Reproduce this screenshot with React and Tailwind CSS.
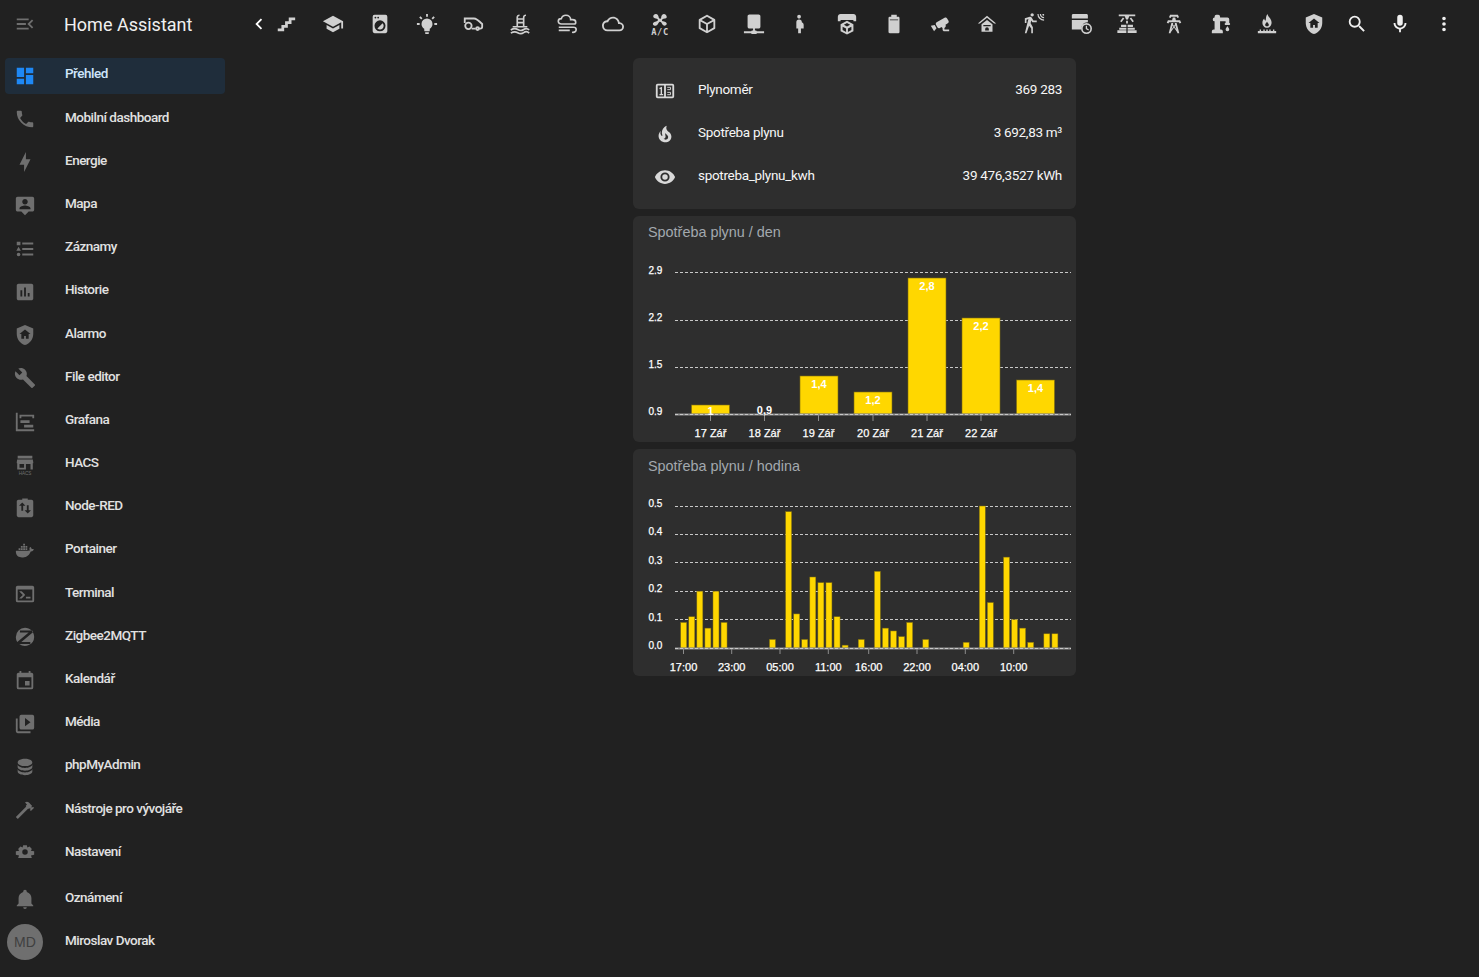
// App.jsx
import React from "react";

const P = {
  menuOpen: "M21,15.61L19.59,17L14.58,12L19.59,7L21,8.39L17.44,12L21,15.61M3,6H16V8H3V6M3,13V11H13V13H3M3,18V16H16V18H3Z",
  dashboard: "M13,3V9H21V3M13,21H21V11H13M3,21H11V15H3M3,13H11V3H3V13Z",
  phone: "M6.62,10.79C8.06,13.62 10.38,15.94 13.21,17.38L15.41,15.18C15.69,14.9 16.08,14.82 16.43,14.93C17.55,15.3 18.75,15.5 20,15.5A1,1 0 0,1 21,16.5V20A1,1 0 0,1 20,21A17,17 0 0,1 3,4A1,1 0 0,1 4,3H7.5A1,1 0 0,1 8.5,4C8.5,5.25 8.7,6.45 9.07,7.57C9.18,7.92 9.1,8.31 8.82,8.59L6.62,10.79Z",
  bolt: "M11 15H6L13 1V9H18L11 23V15Z",
  map: "M20 2H4C2.9 2 2 2.9 2 4V16C2 17.1 2.9 18 4 18H8L12 22L16 18H20C21.1 18 22 17.1 22 16V4C22 2.9 21.1 2 20 2M12 4.3C13.66 4.3 15 5.64 15 7.3S13.66 10.3 12 10.3 9 8.96 9 7.3 10.34 4.3 12 4.3M18 15.5H6V14.5C6 12.7 10 11.5 12 11.5S18 12.7 18 14.5V15.5Z",
  logbook: "M5,9.5L7.5,14H2.5L5,9.5M3,4H7V8H3V4M5,20A2,2 0 0,0 7,18A2,2 0 0,0 5,16A2,2 0 0,0 3,18A2,2 0 0,0 5,20M9,5V7H21V5H9M9,19H21V17H9V19M9,13H21V11H9V13Z",
  chartBox: "M19 3H5C3.9 3 3 3.9 3 5V19C3 20.1 3.9 21 5 21H19C20.1 21 21 20.1 21 19V5C21 3.9 20.1 3 19 3M9 17H7V10H9V17M13 17H11V7H13V17M17 17H15V13H17V17Z",
  shieldHome: "M12 1L3 5V11C3 16.5 6.8 21.7 12 23C17.2 21.7 21 16.5 21 11V5L12 1M16 11V16H13V13H11V16H8V11H6L12 6L18 11H16Z",
  wrench: "M22.7,19L13.6,9.9C14.5,7.6 14,4.9 12.1,3C10.1,1 7.1,0.6 4.7,1.7L9,6L6,9L1.6,4.7C0.4,7.1 0.9,10.1 2.9,12.1C4.8,14 7.5,14.5 9.8,13.6L18.9,22.7C19.3,23.1 19.9,23.1 20.3,22.7L22.6,20.4C23.1,20 23.1,19.3 22.7,19Z",
  timeline: "M2,2H4V20H22V22H2V2M7,10H17V13H7V10M11,15H21V18H11V15M6,4H22V8H20V6H8V8H6V4Z",
  nodeRed: "M5 3H9V1.5H15V3H19C20.1 3 21 3.9 21 5V20C21 21.1 20.1 22 19 22H5C3.9 22 3 21.1 3 20V5C3 3.9 3.9 3 5 3M9 6L5.5 9.5H8V15H10V9.5H12.5L9 6M14 9V14.5H11.5L15 18L18.5 14.5H16V9H14Z",
  docker: "M21.81 10.25C21.75 10.21 21.25 9.83 20.19 9.83C19.91 9.83 19.63 9.85 19.35 9.9C19.14 8.44 17.94 7.73 17.89 7.7L17.6 7.53L17.41 7.81C17.17 8.18 17 8.59 16.9 9C16.71 9.83 16.83 10.62 17.25 11.29C16.74 11.58 15.92 11.65 15.75 11.66H2.62C2.28 11.66 2 11.94 2 12.28C2 13.42 2.18 14.55 2.57 15.62C3 16.76 3.65 17.6 4.5 18.13C5.46 18.72 7 19 8.79 19C9.57 19 10.35 18.93 11.11 18.79C12.19 18.59 13.22 18.22 14.17 17.67C14.95 17.22 15.65 16.65 16.24 15.97C17.24 14.84 17.83 13.58 18.27 12.46H18.45C19.54 12.46 20.22 12.03 20.59 11.66C20.84 11.43 21.03 11.15 21.16 10.83L21.24 10.6L21.81 10.25M5 10.9H7V9H5V10.9M7.5 10.9H9.5V9H7.5V10.9M10 10.9H12V9H10V10.9M12.5 10.9H14.5V9H12.5V10.9M7.5 8.5H9.5V6.5H7.5V8.5M10 8.5H12V6.5H10V8.5M12.5 8.5H14.5V6.5H12.5V8.5M10 6H12V4H10V6Z",
  console: "M20,19V7H4V19H20M20,3A2,2 0 0,1 22,5V19A2,2 0 0,1 20,21H4A2,2 0 0,1 2,19V5C2,3.89 2.9,3 4,3H20M13,17V15H18V17H13M9.58,13L5.57,9H8.4L11.7,12.3C12.09,12.69 12.09,13.33 11.7,13.72L8.42,17H5.59L9.58,13Z",
  zigbee: "M12 2A10 10 0 0 0 2 12C2 14 2.6 15.9 3.6 17.5L16 7H6.5V5H19.8L21 6.6L8 17.5H17.8V19.5H5.7A10 10 0 0 0 22 12C22 6.5 17.5 2 12 2Z",
  calendar: "M19 19H5V8H19M16 1V3H8V1H6V3H5C3.89 3 3 3.89 3 5V19A2 2 0 0 0 5 21H19A2 2 0 0 0 21 19V5C21 3.89 20.1 3 19 3H18V1M17 12H12V17H17V12Z",
  media: "M4,6H2V20A2,2 0 0,0 4,22H18V20H4V6M20,2H8A2,2 0 0,0 6,4V16A2,2 0 0,0 8,18H20A2,2 0 0,0 22,16V4A2,2 0 0,0 20,2M12,14.5V5.5L18,10L12,14.5Z",
  database: "M12,3C7.58,3 4,4.79 4,7C4,9.21 7.58,11 12,11C16.42,11 20,9.21 20,7C20,4.79 16.42,3 12,3M4,9V12C4,14.21 7.58,16 12,16C16.42,16 20,14.21 20,12V9C20,11.21 16.42,13 12,13C7.58,13 4,11.21 4,9M4,14V17C4,19.21 7.58,21 12,21C16.42,21 20,19.21 20,17V14C20,16.21 16.42,18 12,18C7.58,18 4,16.21 4,14Z",
  hammer: "M2 19.63L13.43 8.2L12.72 7.5L14.14 6.07L12 3.89C13.2 2.7 15.09 2.7 16.27 3.89L19.87 7.5L18.45 8.91H21.29L22 9.62L18.45 13.21L17.74 12.5V9.62L16.27 11.04L15.56 10.33L4.13 21.76L2 19.63Z",
  cog: "M10 3.5H14L14.6 6L17 5L19.5 7.5L18.3 9.5L22 10V14L18.5 14.8L19.5 17.5H4.5L5.5 14.8L2 14V10L5.7 9.5L4.5 7.5L7 5L9.4 6L10 3.5M12 8A3 3 0 1 0 12 14A3 3 0 0 0 12 8Z",
  bell: "M21,19V20H3V19L5,17V11C5,7.9 7.03,5.17 10,4.29C10,4.19 10,4.1 10,4A2,2 0 0,1 12,2A2,2 0 0,1 14,4C14,4.1 14,4.19 14,4.29C16.97,5.17 19,7.9 19,11V17L21,19M14,21A2,2 0 0,1 12,23A2,2 0 0,1 10,21",
  chevronLeft: "M15.41,16.58L10.83,12L15.41,7.41L14,6L8,12L14,18L15.41,16.58Z",
  stairs: "M15,5V9H11V13H7V17H3V20H10V16H14V12H18V8H22V5H15Z",
  school: "M12,3L1,9L12,15L21,10.09V17H23V9M5,13.18V17.18L12,21L19,17.18V13.18L12,17L5,13.18Z",
  washer: "M14.83,11.17C16.39,12.73 16.39,15.27 14.83,16.83C13.27,18.39 10.73,18.39 9.17,16.83L14.83,11.17M6,2H18A2,2 0 0,1 20,4V20A2,2 0 0,1 18,22H6A2,2 0 0,1 4,20V4A2,2 0 0,1 6,2M7,4A1,1 0 0,0 6,5A1,1 0 0,0 7,6A1,1 0 0,0 8,5A1,1 0 0,0 7,4M10,4A1,1 0 0,0 9,5A1,1 0 0,0 10,6A1,1 0 0,0 11,5A1,1 0 0,0 10,4M12,8A6,6 0 0,0 6,14A6,6 0 0,0 12,20A6,6 0 0,0 18,14A6,6 0 0,0 12,8Z",
  bulb: "M12,6A6,6 0 0,1 18,12C18,14.22 16.79,16.16 15,17.2V19A1,1 0 0,1 14,20H10A1,1 0 0,1 9,19V17.2C7.21,16.16 6,14.22 6,12A6,6 0 0,1 12,6M14,21V22A1,1 0 0,1 13,23H11A1,1 0 0,1 10,22V21H14M20,11H23V13H20V11M1,11H4V13H1V11M13,1V4H11V1H13M4.92,3.5L7.05,5.64L5.63,7.05L3.5,4.93L4.92,3.5M16.95,5.63L19.07,3.5L20.5,4.93L18.37,7.05L16.95,5.63Z",
  cloud: "M19,18H6A4,4 0 0,1 2,14A4,4 0 0,1 6,10H6.71C7.37,7.69 9.5,6 12,6A5.5,5.5 0 0,1 17.5,11.5V12H19A3,3 0 0,1 22,15A3,3 0 0,1 19,18M19.35,10.03C18.67,6.59 15.64,4 12,4C9.11,4 6.6,5.64 5.35,8.03C2.34,8.36 0,10.9 0,14A6,6 0 0,0 6,20H19A5,5 0 0,0 24,15C24,12.36 21.95,10.22 19.35,10.03Z",
  cube: "M21,16.5C21,16.88 20.79,17.21 20.47,17.38L12.57,21.82C12.41,21.94 12.21,22 12,22C11.79,22 11.59,21.94 11.43,21.82L3.53,17.38C3.21,17.21 3,16.88 3,16.5V7.5C3,7.12 3.21,6.79 3.53,6.62L11.43,2.18C11.59,2.06 11.79,2 12,2C12.21,2 12.41,2.06 12.57,2.18L20.47,6.62C20.79,6.79 21,7.12 21,7.5V16.5M12,4.15L6.04,7.5L12,10.85L17.96,7.5L12,4.15M5,15.91L11,19.29V12.58L5,9.21V15.91M19,15.91V9.21L13,12.58V19.29L19,15.91Z",
  nas: "M7 1.5H17C18.1 1.5 19 2.4 19 3.5V15C19 16.1 18.1 17 17 17H13V19H14A1 1 0 0 1 15 20H23V22H15A1 1 0 0 1 14 23H10A1 1 0 0 1 9 22H1V20H9A1 1 0 0 1 10 19H11V17H7C5.9 17 5 16.1 5 15V3.5C5 2.4 5.9 1.5 7 1.5Z",
  pregnant: "M9,4C9,2.89 9.89,2 11,2C12.11,2 13,2.89 13,4C13,5.11 12.11,6 11,6C9.89,6 9,5.11 9,4M16,13C16,11.66 15.17,10.5 14,10A3,3 0 0,0 11,7A3,3 0 0,0 8,10V17H10V22H13V17H16V13Z",
  printer: "M5 1H19C20.7 1 22 2.3 22 4V9H19V7.5H5V9H2V4C2 2.3 3.3 1 5 1M12 8.5L19 12.3V19.8L12 23.5L5 19.8V12.3L12 8.5M12 11L8.6 12.9L12 14.8L15.4 12.9L12 11M7.2 14.9V18.6L11 20.7V16.9L7.2 14.9M16.8 14.9L13 16.9V20.7L16.8 18.6V14.9Z",
  battery: "M16.67,4H15V2H9V4H7.33A1.33,1.33 0 0,0 6,5.33V20.67C6,21.4 6.6,22 7.33,22H16.67A1.33,1.33 0 0,0 18,20.67V5.33C18,4.6 17.4,4 16.67,4M16.5 7H7.5V8H16.5V7Z",
  cctv: "M18.15,4.94C17.77,4.91 17.37,5 17,5.2L8.35,10.2C7.39,10.76 7.07,12 7.62,12.94L9.12,15.53C9.67,16.5 10.89,16.82 11.85,16.27L13.65,15.23C13.92,15.69 14.32,16.06 14.81,16.27V18.04C14.81,19.13 15.7,20 16.81,20H22V18.04H16.81V16.27C17.72,15.87 18.31,14.97 18.31,14C18.31,13.54 18.19,13.11 17.97,12.73L20.5,11.27C21.47,10.71 21.8,9.5 21.24,8.53L19.74,5.94C19.4,5.34 18.79,5 18.15,4.94M6.22,13.17L2,13.87L2.75,15.17L4.75,18.63L5.5,19.93L8.22,16.63L6.22,13.17Z",
  garage: "M12 3L2 11.5H4.2L12 5.3L19.8 11.5H22L12 3M12 7.5L6 12.3V20.5H18V12.3L12 7.5M8 13H16V14.5H8V13M12 15.5A2 2 0 0 1 14 17.5V19H10V17.5A2 2 0 0 1 12 15.5Z",
  motion: "M10,0.2C9,0.2 8.2,1 8.2,2C8.2,3 9,3.8 10,3.8C11,3.8 11.8,3 11.8,2C11.8,1 11,0.2 10,0.2M15.67,1A7.33,7.33 0 0,0 23,8.33V7A6,6 0 0,1 17,1H15.67M18.33,1C18.33,3.58 20.42,5.67 23,5.67V4.33C21.16,4.33 19.67,2.84 19.67,1H18.33M21,1A2,2 0 0,0 23,3V1H21M7.92,4.03C7.75,4.03 7.58,4.06 7.42,4.11L2,5.8V11H3.8V7.33L5.91,6.67L2,22H3.8L6.67,13.89L9,17V22H10.8V15.59L8.31,11.05L9.04,8.18L10.12,10H15V8.2H11.38L9.38,4.87C9.08,4.37 8.54,4.03 7.92,4.03Z",
  storeClock: "M2 2.5C2 1.7 2.7 1 3.5 1H18C18.8 1 19.5 1.7 19.5 2.5V6H2V2.5M2 7.5H19.5V10.2C15.5 10 12.2 13 12 18H2V7.5M18 11A6 6 0 1 1 18 23A6 6 0 0 1 18 11M18 12.8A4.2 4.2 0 1 0 18 21.2A4.2 4.2 0 0 0 18 12.8M17.2 14H18.6V16.7L20.7 18L20 19.1L17.2 17.5V14Z",
  sprinkler: "M3 1.5H21V3.5H14.5L13 7H11L9.5 3.5H3V1.5M7.5 5L9 6L6 10L4.5 9L7.5 5M16.5 5L19.5 9L18 10L15 6L16.5 5M11 8.5H13V11.5H11V8.5M5.5 12.8H11.3V15.3H5.5V12.8M12.7 12.8H18.5V15.3H12.7V12.8M3.5 16H11.3V18.2H3.5V16M12.7 16H20.5V18.2H12.7V16M1.5 18.9H11.3V21.8H1.5V18.9M12.7 18.9H22.5V21.8H12.7V18.9Z",
  tower: "M8.28,5.45L6.5,4.55L7.76,2H16.23L17.5,4.55L15.72,5.44L15,4H9L8.28,5.45M18.62,8H14.09L13.3,5H10.7L9.91,8H5.38L4.1,10.55L5.89,11.44L6.62,10H17.38L18.1,11.45L19.89,10.56L18.62,8M17.77,22H15.7L15.46,21.1L12,15.9L8.53,21.1L8.3,22H6.23L9.12,11H11.19L10.83,12.35L12,14.1L13.16,12.35L12.81,11H14.88L17.77,22M11.4,15L10.5,13.65L9.32,18.13L11.4,15M14.68,18.12L13.5,13.64L12.6,15L14.68,18.12Z",
  pump: "M19,14.5C19,14.5 21,16.67 21,18A2,2 0 0,1 19,20A2,2 0 0,1 17,18C17,16.67 19,14.5 19,14.5M5,18V9A2,2 0 0,1 3,7A2,2 0 0,1 5,5V4A2,2 0 0,1 7,2H9A2,2 0 0,1 11,4V5H19A2,2 0 0,1 21,7V9L21,11A1,1 0 0,1 22,12A1,1 0 0,1 21,13H17A1,1 0 0,1 16,12A1,1 0 0,1 17,11V9H11V18H12A2,2 0 0,1 14,20V22H2V20A2,2 0 0,1 4,18H5Z",
  burner: "M12.5 1C13 4 17 6 17 10.5C17 13.5 14.8 16 12 16C9.2 16 7 13.5 7 10.5C7 8.5 8 7 9 6C9 7.5 9.8 8.3 10.6 8.3C11 5.5 10.8 3 12.5 1M12 9.5C11.4 10.8 10 11.3 10 12.8C10 13.9 10.9 14.5 12 14.5C13.1 14.5 14 13.9 14 12.8C14 11.3 12.6 10.8 12 9.5M4 18H5.5V19.5H8V18H9.5V19.5H11.2V18H12.8V19.5H14.5V18H16V19.5H18.5V18H20V19.5H22V22H2V19.5H4V18Z",
  magnify: "M9.5,3A6.5,6.5 0 0,1 16,9.5C16,11.11 15.41,12.59 14.44,13.73L14.71,14H15.5L20.5,19L19,20.5L14,15.5V14.71L13.73,14.44C12.59,15.41 11.11,16 9.5,16A6.5,6.5 0 0,1 3,9.5A6.5,6.5 0 0,1 9.5,3M9.5,5C7,5 5,7 5,9.5C5,12 7,14 9.5,14C12,14 14,12 14,9.5C14,7 12,5 9.5,5Z",
  mic: "M12,2A3,3 0 0,1 15,5V11A3,3 0 0,1 12,14A3,3 0 0,1 9,11V5A3,3 0 0,1 12,2M19,11C19,14.53 16.39,17.44 13,17.93V21H11V17.93C7.61,17.44 5,14.53 5,11H7A5,5 0 0,0 12,16A5,5 0 0,0 17,11H19Z",
  dots: "M12,16A2,2 0 0,1 14,18A2,2 0 0,1 12,20A2,2 0 0,1 10,18A2,2 0 0,1 12,16M12,10A2,2 0 0,1 14,12A2,2 0 0,1 12,14A2,2 0 0,1 10,12A2,2 0 0,1 12,10M12,4A2,2 0 0,1 14,6A2,2 0 0,1 12,8A2,2 0 0,1 10,6A2,2 0 0,1 12,4Z",
  fire: "M17.66 11.2C17.43 10.9 17.15 10.64 16.89 10.38C16.22 9.78 15.46 9.35 14.82 8.72C13.33 7.26 13 4.85 13.95 3C13 3.23 12.17 3.75 11.46 4.32C8.87 6.4 7.85 10.07 9.07 13.22C9.11 13.32 9.15 13.42 9.15 13.55C9.15 13.77 9 13.97 8.8 14.05C8.57 14.15 8.33 14.09 8.14 13.93C8.08 13.88 8.04 13.83 8 13.76C6.87 12.33 6.69 10.28 7.45 8.64C5.78 10 4.87 12.3 5 14.47C5.06 14.97 5.12 15.47 5.29 15.97C5.43 16.57 5.7 17.17 6 17.7C7.08 19.43 8.95 20.67 10.96 20.92C13.1 21.19 15.39 20.8 17.03 19.32C18.86 17.66 19.5 15 18.56 12.72L18.43 12.46C18.22 12 17.66 11.2 17.66 11.2M14.5 17.5C14.22 17.74 13.76 18 13.4 18.1C12.28 18.5 11.16 17.94 10.5 17.28C11.69 17 12.4 16.12 12.61 15.23C12.78 14.43 12.46 13.77 12.33 13C12.21 12.26 12.23 11.63 12.5 10.94C12.69 11.32 12.89 11.7 13.13 12C13.9 13 15.11 13.44 15.37 14.8C15.41 14.94 15.43 15.08 15.43 15.23C15.46 16.05 15.1 16.95 14.5 17.5H14.5Z",
  eye: "M12,9A3,3 0 0,0 9,12A3,3 0 0,0 12,15A3,3 0 0,0 15,12A3,3 0 0,0 12,9M12,17A5,5 0 0,1 7,12A5,5 0 0,1 12,7A5,5 0 0,1 17,12A5,5 0 0,1 12,17M12,4.5C7,4.5 2.73,7.61 1,12C2.73,16.39 7,19.5 12,19.5C17,19.5 21.27,16.39 23,12C21.27,7.61 17,4.5 12,4.5Z",
};

function Icon({ d, className = "" }) {
  return (
    <svg viewBox="0 0 24 24" className={`w-[22px] h-[22px] fill-current ${className}`}>
      <path d={d} fillRule="evenodd" />
    </svg>
  );
}

// outline icons that are easier as strokes
function MowerIcon() {
  return (
    <svg viewBox="0 0 24 24" className="w-[22px] h-[22px]" fill="none" stroke="currentColor" strokeWidth="2">
      <path d="M3 11V6H13C16 6 20 10 22 12V15C22 16 21 17 20 17H18.5M10.5 17H15" />
      <circle cx="7" cy="14" r="3.5" />
      <circle cx="17" cy="17" r="1.5" />
    </svg>
  );
}

function PoolIcon() {
  return (
    <svg viewBox="0 0 24 24" className="w-[22px] h-[22px]" fill="none" stroke="currentColor" strokeWidth="1.8">
      <path d="M9 15V5C9 3.5 10 2.5 11.5 2.5M16 15V5C16 3.5 17 2.5 18.5 2.5M9 6.5H16M9 10.5H16M4 15H20" />
      <path d="M2 18.5C5 16.5 7 16.5 9.5 18C12 19.5 14 19.5 16 18C18 16.5 20 16.5 22 18.5M2 22C5 20 7 20 9.5 21.5C12 23 14 23 16 21.5C18 20 20 20 22 22" />
    </svg>
  );
}

function WindyIcon() {
  return (
    <svg viewBox="0 0 24 24" className="w-[22px] h-[22px]" fill="none" stroke="currentColor" strokeWidth="1.8">
      <path d="M6 12C3.5 12 2.5 10.5 2.5 9C2.5 7.5 3.7 6.2 5.8 6.2C6.5 3.8 8.5 2.5 10.8 2.5C13.8 2.5 16 4.6 16 7.3H18C20 7.3 21.5 8.5 21.5 10C21.5 11 21 12 20 12H6Z" />
      <path d="M3 15.5H19C21 15.5 22 16.8 22 18C22 20 20.3 21.5 17.5 21M3 19H15" />
    </svg>
  );
}

function AcIcon() {
  return (
    <svg viewBox="0 0 24 24" className="w-[22px] h-[22px] overflow-visible">
      <g transform="translate(12 7.5) scale(0.82) translate(-12 -9.7)">
        <path fill="currentColor" d="M12 8.3C13 8.3 13.5 7.8 13.5 7C13.5 5.5 14.5 2 17 2C19.5 2 21 4.5 21 6C21 8.5 17.5 8 16 8.5C15 8.8 14.5 9.5 14.5 10.5C14.8 11.5 16 11.5 17 11.8C19 12.3 21 13 21 15C21 16.5 19.5 17.5 18 17.5C15.5 17.5 14.2 14 13.5 13C13 12.2 12.2 12 11.5 12.2C10.5 12.8 9.8 14 9 15.5C8 17 6.5 17.5 5 17.5C3.5 17.5 2.5 16.5 2.5 15C2.5 13 5 12.2 7 11.8C8.5 11.4 9.3 11 9.3 10C9.3 9 8 8.5 6.5 8C4.5 7.3 3 7 3 5C3 3.5 4.5 2 6.5 2C9 2 9.8 4.5 10.2 6C10.5 7.5 11 8.3 12 8.3Z" />
      </g>
      <text x="12" y="23.5" textAnchor="middle" fill="currentColor" fontSize="9.5" fontWeight="700" letterSpacing="0.6" fontFamily="'DejaVu Sans Mono', monospace">A/C</text>
    </svg>
  );
}

function HacsIcon() {
  return (
    <svg viewBox="0 0 24 24" className="w-[22px] h-[22px]">
      <path fill="currentColor" fillRule="evenodd" d="M4 2H20V5H4V2M3.5 6H20.5L21 9V10H20.5V17H3.5V10H3V9L3.5 6M6 11V15H11V11H6M13 11V17H18V11H13Z" />
      <text x="12" y="23" textAnchor="middle" fill="currentColor" fontSize="5" fontFamily="'Liberation Sans', sans-serif">HACS</text>
    </svg>
  );
}

function CounterIcon() {
  return (
    <svg viewBox="0 0 24 24" className="w-[22px] h-[22px]" fill="none" stroke="currentColor">
      <rect x="3" y="5" width="18" height="14" rx="1" strokeWidth="2" />
      <path d="M12 5V19" strokeWidth="2" />
      <path d="M6 9.5L8 8.5V16M6 16H10" strokeWidth="1.5" />
      <path d="M14.5 8H18V10.5H14.5M14.5 13.5H18V16H14.5" strokeWidth="1" />
    </svg>
  );
}

const navItems = [
  { label: "Přehled", d: P.dashboard, active: true },
  { label: "Mobilní dashboard", d: P.phone },
  { label: "Energie", d: P.bolt },
  { label: "Mapa", d: P.map },
  { label: "Záznamy", d: P.logbook },
  { label: "Historie", d: P.chartBox },
  { label: "Alarmo", d: P.shieldHome },
  { label: "File editor", d: P.wrench },
  { label: "Grafana", d: P.timeline },
  { label: "HACS", custom: <HacsIcon /> },
  { label: "Node-RED", d: P.nodeRed },
  { label: "Portainer", d: P.docker },
  { label: "Terminal", d: P.console },
  { label: "Zigbee2MQTT", d: P.zigbee },
  { label: "Kalendář", d: P.calendar },
  { label: "Média", d: P.media },
  { label: "phpMyAdmin", d: P.database },
  { label: "Nástroje pro vývojáře", d: P.hammer },
  { label: "Nastavení", d: P.cog },
];

const tabs = [
  <Icon d={P.stairs} />, <Icon d={P.school} />, <Icon d={P.washer} />, <Icon d={P.bulb} />,
  <MowerIcon />, <PoolIcon />, <WindyIcon />, <Icon d={P.cloud} />, <AcIcon />,
  <Icon d={P.cube} />, <Icon d={P.nas} />, <Icon d={P.pregnant} />, <Icon d={P.printer} />,
  <Icon d={P.battery} />, <Icon d={P.cctv} />, <Icon d={P.garage} />, <Icon d={P.motion} />,
  <Icon d={P.storeClock} />, <Icon d={P.sprinkler} />, <Icon d={P.tower} />, <Icon d={P.pump} />,
  <Icon d={P.burner} />, <Icon d={P.shieldHome} />,
];

function NavRow({ item }) {
  return (
    <div className={`flex items-center h-[36px] rounded ${item.active ? "bg-[#1f2d3b]" : ""}`}>
      <div className={`w-[40px] flex justify-center ${item.active ? "text-[#1e88f5]" : "text-[#6f6f6f]"}`}>
        {item.custom || <Icon d={item.d} />}
      </div>
      <span className={`ml-[20px] pb-[5px] text-[13.5px] font-medium tracking-[-0.5px] ${item.active ? "text-[#cfe6fb]" : "text-[#e1e1e1]"}`}>
        {item.label}
      </span>
    </div>
  );
}

function Sidebar() {
  return (
    <aside className="w-[230px] shrink-0 flex flex-col">
      <div className="h-[58px] flex items-start pt-[13px]">
        <div className="w-[50px] flex justify-center text-[#6f6f6f]">
          <Icon d={P.menuOpen} />
        </div>
        <span className="ml-[14px] text-[18px] leading-[24px] text-[#f0f0f0]">Home Assistant</span>
      </div>
      <div className="ml-[5px] mr-[5px] flex flex-col gap-[7.2px]">
        {navItems.map((item) => (
          <NavRow key={item.label} item={item} />
        ))}
      </div>
      <div className="ml-[5px] mr-[5px] mt-[10px] flex flex-col gap-[7px]">
        <NavRow item={{ label: "Oznámení", d: P.bell }} />
        <div className="flex items-center h-[36px]">
          <div className="ml-[2px] w-[36px] h-[36px] rounded-full bg-[#6f6f6f] text-[#3f3f3f] text-[14px] flex items-center justify-center font-['Liberation_Sans',sans-serif]">
            MD
          </div>
          <span className="ml-[22px] pb-[5px] text-[13.5px] font-medium tracking-[-0.5px] text-[#e1e1e1]">Miroslav Dvorak</span>
        </div>
      </div>
    </aside>
  );
}

function Toolbar() {
  return (
    <div className="h-[48px] flex items-center">
      <div className="ml-[18px] text-[#ffffff]">
        <Icon d={P.chevronLeft} />
      </div>
      <div className="-ml-[7px] flex text-[#d0d0d0]">
        {tabs.map((t, i) => (
          <div key={i} className="w-[46.72px] flex justify-center">
            {t}
          </div>
        ))}
      </div>
      <div className="-ml-[2px] flex text-[#f0f0f0]">
        <div className="w-[43.3px] flex justify-center"><Icon d={P.magnify} /></div>
        <div className="w-[43.3px] flex justify-center"><Icon d={P.mic} /></div>
        <div className="w-[43.3px] flex justify-center"><Icon d={P.dots} /></div>
      </div>
    </div>
  );
}

function EntityRow({ icon, name, value }) {
  return (
    <div className="flex items-center h-[36px] pl-[21px] pr-[14px]">
      <div className="w-[22px] flex justify-center text-[#d9d9d9]">{icon}</div>
      <span className="ml-[22px] pb-[4px] text-[13.5px] tracking-[-0.3px] text-[#f6f6f6]">{name}</span>
      <span className="ml-auto pb-[4px] text-[13.5px] tracking-[-0.3px] text-[#f6f6f6]">{value}</span>
    </div>
  );
}

const LABEL = "'Liberation Sans', Arial, sans-serif";

function Grid({ ys, x1 = 675, x2 = 1071 }) {
  return ys.map((y) => (
    <line key={y} x1={x1} x2={x2} y1={y} y2={y} stroke="#c8c8c8" strokeWidth="1" strokeDasharray="3 2" />
  ));
}

// one labelled axis text; regular face with a thin stroke reads like the picture's semi-bold
function AxisText({ x, y, size, anchor, children }) {
  return (
    <text x={x} y={y} textAnchor={anchor} fontSize={size} fill="#ffffff" stroke="#ffffff" strokeWidth="0.25">
      {children}
    </text>
  );
}

const dayBars = [
  { x: 691.5, top: 405, label: "1", labelY: 414.5 },
  { x: 745.5, top: 414, label: "0,9", labelY: 414, none: true },
  { x: 800, top: 376, label: "1,4" },
  { x: 854, top: 392, label: "1,2" },
  { x: 908, top: 278, label: "2,8" },
  { x: 962, top: 318, label: "2,2" },
  { x: 1016.5, top: 380, label: "1,4" },
];
const dayTicks = [
  [710.5, "17 Zář"], [764.5, "18 Zář"], [818.5, "19 Zář"],
  [873, "20 Zář"], [927, "21 Zář"], [981, "22 Zář"],
];
const dayY = [[273, "2.9"], [320, "2.2"], [367, "1.5"], [414, "0.9"]];

function DayChart() {
  return (
    <svg viewBox="633 254 443 188" className="block w-[443px] h-[188px]" fontFamily={LABEL}>
      <Grid ys={[272.5, 320.5, 367.5]} />
      {dayBars.filter((b) => !b.none).map((b) => (
        <rect key={b.x} x={b.x} y={b.top} width="38" height={414 - b.top} fill="#ffd700" stroke="#7d6c10" strokeWidth="0.6" />
      ))}
      <line x1="675" x2="1071" y1="414.5" y2="414.5" stroke="#8f8f8f" strokeWidth="2" />
      <Grid ys={[414.5]} />
      {dayTicks.map(([x, t]) => (
        <g key={t}>
          <line x1={x} x2={x} y1="415" y2="421" stroke="#8c8c8c" />
          <AxisText x={x} y="437" size="11" anchor="middle">{t}</AxisText>
        </g>
      ))}
      {dayY.map(([y, t]) => (
        <AxisText key={t} x="648.5" y={y + 0.7} size="10">{t}</AxisText>
      ))}
      {dayBars.map((b) => (
        <text
          key={b.label + b.x}
          x={b.x + 19}
          y={b.labelY || b.top + 12}
          textAnchor="middle"
          fontSize="11"
          fontWeight="700"
          fill="#ffffff"
        >
          {b.label}
        </text>
      ))}
    </svg>
  );
}

// values read off the picture, one per hour, 0.5 = 142px
const hourValues = [
  0.09, 0.11, 0.2, 0.07, 0.2, 0.09, 0, 0, 0, 0, 0, 0.03, 0, 0.48, 0.12, 0.03, 0.25, 0.23, 0.23, 0.11, 0.01, 0,
  0.03, 0, 0.27, 0.07, 0.06, 0.04, 0.09, 0, 0.03, 0, 0, 0, 0, 0.02, 0, 0.5, 0.16, 0, 0.32, 0.1, 0.07, 0.02, 0,
  0.05, 0.05,
];
const hourTicks = [
  [683.5, "17:00"], [731.7, "23:00"], [780, "05:00"], [828.3, "11:00"],
  [868.7, "16:00"], [917, "22:00"], [965.3, "04:00"], [1013.7, "10:00"],
];
const hourY = [[506, "0.5"], [534.5, "0.4"], [563, "0.3"], [591.5, "0.2"], [620, "0.1"], [648, "0.0"]];

function HourChart() {
  return (
    <svg viewBox="633 487 443 189" className="block w-[443px] h-[189px]" fontFamily={LABEL}>
      <Grid ys={[506.5, 534.5, 562.5, 591.5, 619.5]} />
      {hourValues.map((v, i) =>
        v > 0 ? (
          <rect key={i} x={680.7 + i * 8.07} y={648 - v * 284} width="6" height={v * 284} fill="#ffd700" stroke="#7d6c10" strokeWidth="0.5" />
        ) : null,
      )}
      <line x1="675" x2="1071" y1="648.5" y2="648.5" stroke="#8f8f8f" strokeWidth="2" />
      <Grid ys={[648.5]} />
      {hourTicks.map(([x, t]) => (
        <g key={t}>
          <line x1={x} x2={x} y1="649" y2="654" stroke="#8c8c8c" />
          <AxisText x={x} y="671" size="11" anchor="middle">{t}</AxisText>
        </g>
      ))}
      {hourY.map(([y, t]) => (
        <AxisText key={t} x="648.5" y={y + 0.7} size="10">{t}</AxisText>
      ))}
    </svg>
  );
}

function ChartCard({ title, titleClass, children }) {
  return (
    <div className="bg-[#2e2e2e] rounded-md">
      <div className={`h-[38px] pl-[15px] text-[14.4px] leading-[20px] text-[#a3a9ae] font-['Liberation_Sans',Arial,sans-serif] ${titleClass}`}>
        {title}
      </div>
      {children}
    </div>
  );
}

export default function App() {
  return (
    <div className="flex h-[977px] overflow-hidden bg-[#212121] font-['Roboto',sans-serif]">
      <Sidebar />
      <div className="flex-1 min-w-0">
        <Toolbar />
        <main className="mt-[10px] flex justify-center">
          <div className="w-[443px] flex flex-col gap-[7px]">
            <div className="bg-[#2e2e2e] rounded-md h-[151px] pt-[15px] flex flex-col gap-[7px]">
              <EntityRow icon={<CounterIcon />} name="Plynoměr" value="369 283" />
              <EntityRow icon={<Icon d={P.fire} />} name="Spotřeba plynu" value="3 692,83 m³" />
              <EntityRow icon={<Icon d={P.eye} />} name="spotreba_plynu_kwh" value="39 476,3527 kWh" />
            </div>
            <ChartCard title="Spotřeba plynu / den" titleClass="pt-[6px]">
              <DayChart />
            </ChartCard>
            <ChartCard title="Spotřeba plynu / hodina" titleClass="pt-[7px]">
              <HourChart />
            </ChartCard>
          </div>
        </main>
      </div>
    </div>
  );
}
